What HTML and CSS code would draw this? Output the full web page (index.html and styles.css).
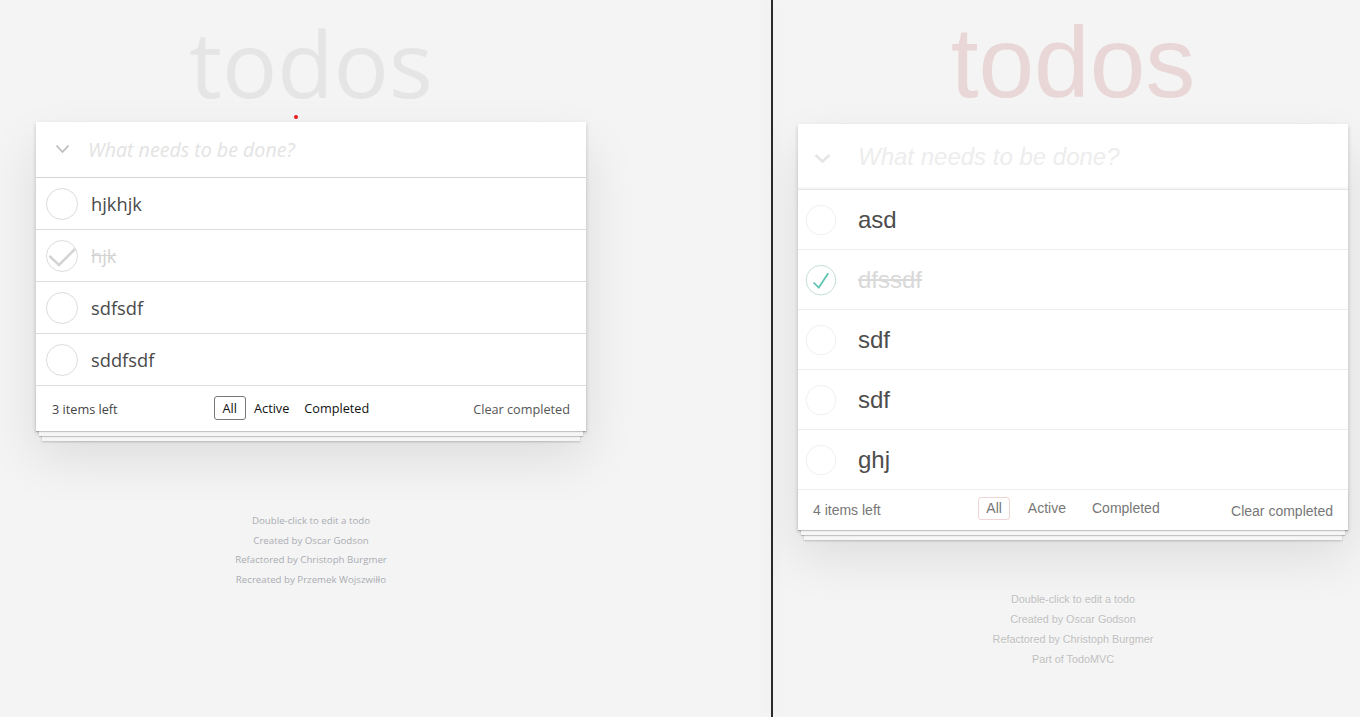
FILE: index.html
```html
<!DOCTYPE html>
<html lang="en">
<head>
<meta charset="utf-8">
<title>todos</title>
<link rel="stylesheet" href="styles.css">
</head>
<body>
<div class="screen">
  <section class="pane pane-left">
    <div class="a-app">
      <h1 class="a-title">todos</h1>
      <div class="a-card">
        <span class="a-dot"></span>
        <header class="a-head">
          <svg class="a-chev" width="15" height="10" viewBox="0 0 15 10"><polyline points="1.5,1.5 7.5,8 13.5,1.5" fill="none" stroke="#bdbdbd" stroke-width="1.8"/></svg>
          <span class="a-placeholder">What needs to be done?</span>
        </header>
        <ul class="a-list">
          <li class="a-item"><svg class="a-check" width="32" height="32" viewBox="0 0 32 32"><circle cx="16" cy="16" r="15.5" fill="none" stroke="#dcdcdc" stroke-width="1"/></svg><span class="a-label">hjkhjk</span></li>
          <li class="a-item done"><svg class="a-check" width="32" height="32" viewBox="0 0 32 32"><circle cx="16" cy="16" r="15.5" fill="none" stroke="#dcdcdc" stroke-width="1"/><polyline points="3.5,16 13,25 29,9" fill="none" stroke="#d4d4d4" stroke-width="2.6"/></svg><span class="a-label">hjk</span></li>
          <li class="a-item"><svg class="a-check" width="32" height="32" viewBox="0 0 32 32"><circle cx="16" cy="16" r="15.5" fill="none" stroke="#dcdcdc" stroke-width="1"/></svg><span class="a-label">sdfsdf</span></li>
          <li class="a-item"><svg class="a-check" width="32" height="32" viewBox="0 0 32 32"><circle cx="16" cy="16" r="15.5" fill="none" stroke="#dcdcdc" stroke-width="1"/></svg><span class="a-label">sddfsdf</span></li>
        </ul>
        <footer class="a-foot">
          <span class="a-count">3 items left</span>
          <ul class="a-filters">
            <li><a class="a-filter selected">All</a></li>
            <li><a class="a-filter">Active</a></li>
            <li><a class="a-filter">Completed</a></li>
          </ul>
          <span class="a-clear">Clear completed</span>
        </footer>
      </div>
      <div class="a-info">
        <p>Double-click to edit a todo</p>
        <p>Created by Oscar Godson</p>
        <p>Refactored by Christoph Burgmer</p>
        <p>Recreated by Przemek Wojszwiłło</p>
      </div>
    </div>
  </section>
  <div class="divider"></div>
  <section class="pane pane-right">
    <div class="b-app">
      <h1 class="b-title">todos</h1>
      <div class="b-card">
        <header class="b-head">
          <svg class="b-chev" width="17" height="11" viewBox="0 0 17 11"><polyline points="1.5,2 8.5,8.5 15.5,2" fill="none" stroke="#e6e6e6" stroke-width="2.6"/></svg>
          <span class="b-placeholder">What needs to be done?</span>
        </header>
        <ul class="b-list">
          <li class="b-item"><svg class="b-check" width="40" height="40" viewBox="-10 -18 100 135"><circle cx="50" cy="50" r="50" fill="none" stroke="#ededed" stroke-width="3"/></svg><span class="b-label">asd</span></li>
          <li class="b-item done"><svg class="b-check" width="40" height="40" viewBox="-10 -18 100 135"><circle cx="50" cy="50" r="50" fill="none" stroke="#bddad5" stroke-width="3"/><path fill="#5dc2af" d="M72 25L42 71 27 56l-4 4 20 20 34-52z"/></svg><span class="b-label">dfssdf</span></li>
          <li class="b-item"><svg class="b-check" width="40" height="40" viewBox="-10 -18 100 135"><circle cx="50" cy="50" r="50" fill="none" stroke="#ededed" stroke-width="3"/></svg><span class="b-label">sdf</span></li>
          <li class="b-item"><svg class="b-check" width="40" height="40" viewBox="-10 -18 100 135"><circle cx="50" cy="50" r="50" fill="none" stroke="#ededed" stroke-width="3"/></svg><span class="b-label">sdf</span></li>
          <li class="b-item"><svg class="b-check" width="40" height="40" viewBox="-10 -18 100 135"><circle cx="50" cy="50" r="50" fill="none" stroke="#ededed" stroke-width="3"/></svg><span class="b-label">ghj</span></li>
        </ul>
        <footer class="b-foot">
          <span class="b-count">4 items left</span>
          <ul class="b-filters">
            <li><a class="b-filter selected">All</a></li>
            <li><a class="b-filter">Active</a></li>
            <li><a class="b-filter">Completed</a></li>
          </ul>
          <span class="b-clear">Clear completed</span>
        </footer>
      </div>
      <div class="b-info">
        <p>Double-click to edit a todo</p>
        <p>Created by Oscar Godson</p>
        <p>Refactored by Christoph Burgmer</p>
        <p>Part of TodoMVC</p>
      </div>
    </div>
  </section>
</div>
</body>
</html>
```

FILE: styles.css
```css
* { box-sizing: border-box; }
html, body { margin: 0; padding: 0; }
body { background: #f5f5f5; width: 1360px; height: 717px; overflow: hidden; }
ul { list-style: none; margin: 0; padding: 0; }

.screen { display: flex; height: 717px; }
.pane { height: 717px; background: #f4f4f4; overflow: hidden; }
.pane-left { width: 771px; flex: none; }
.divider { width: 2px; flex: none; background: #2a2a2a; box-shadow: -5px 0 10px rgba(0,0,0,0.06), 4px 0 8px rgba(0,0,0,0.05); position: relative; z-index: 2; }
.pane-right { flex: 1; }

/* ---------- left implementation ---------- */
.a-app { width: 550px; margin-left: 36px; padding-top: 4px; font-family: "Open Sans", "Noto Sans", sans-serif; }
.a-title { margin: 0; height: 118px; line-height: 118px; font-size: 92px; font-weight: 380; color: #e5e5e5; text-align: center; }
.a-card { background: #fff; box-shadow: 0 2px 4px 0 rgba(0,0,0,0.2), 0 25px 50px 0 rgba(0,0,0,0.1); position: relative; }
.a-dot { position: absolute; left: 258px; top: -7px; width: 4px; height: 4px; border-radius: 50%; background: #e8141c; }
.a-head { height: 56px; display: flex; align-items: center; padding-left: 19px; border-bottom: 1px solid #d6d6d6; }
.a-chev { flex: none; margin-top: -2px; }
.a-placeholder { margin-left: 18px; font-size: 19.6px; font-style: italic; color: #e3e3e3; margin-top: 0; }
.a-item { height: 52px; display: flex; align-items: center; border-bottom: 1px solid #dcdcdc; padding-left: 10px; }
.a-check { flex: none; margin-top: 1px; }
.a-label { margin-left: 13px; font-size: 18.3px; color: #4a4a4a; }
.a-item.done .a-label { color: #d3d3d3; text-decoration: line-through; }
.a-foot { height: 45px; display: flex; align-items: center; padding: 0 16px; font-size: 12.7px; position: relative; }
.a-foot::before { content: ""; position: absolute; left: 0; right: 0; bottom: 0; height: 45px; box-shadow: 0 1px 1px rgba(0,0,0,0.2), 0 8px 0 -3px #f6f6f6, 0 9px 1px -3px rgba(0,0,0,0.2), 0 16px 0 -6px #f6f6f6, 0 17px 2px -6px rgba(0,0,0,0.2); pointer-events: none; }
.a-count { color: #444; }
.a-filters { flex: 1; display: flex; justify-content: center; align-items: center; margin-top: -1px; margin-left: 1px; }
.a-filter { display: block; padding: 2px 8px; border: 1px solid transparent; border-radius: 3px; color: #111; line-height: 18px; }
.a-filters li:nth-child(2) .a-filter { margin-left: -1px; }
.a-filters li:last-child .a-filter { margin-left: -3px; }
.a-filter.selected { border-color: #777; }
.a-clear { color: #555; }
.a-info { margin-top: 85px; text-align: center; font-size: 9.7px; color: #aaadb3; }
.a-info p { margin: 10px 0; line-height: 1; }

/* ---------- right implementation ---------- */
.b-app { width: 550px; margin-left: 25px; padding-top: 6px; font-family: "Liberation Sans", Arial, sans-serif; color: #4d4d4d; }
.b-title { margin: 0 0 6px; height: 112px; line-height: 112px; font-size: 100px; font-weight: 400; color: rgba(175,47,47,0.15); text-align: center; }
.b-card { background: #fff; box-shadow: 0 2px 4px 0 rgba(0,0,0,0.2), 0 25px 50px 0 rgba(0,0,0,0.1); }
.b-head { height: 66px; display: flex; align-items: center; padding-left: 16px; box-shadow: inset 0 -2px 1px rgba(0,0,0,0.03); border-bottom: 1px solid #e6e6e6; }
.b-chev { flex: none; margin-top: 3px; }
.b-placeholder { margin-left: 27px; font-size: 24px; font-style: italic; color: #ededed; }
.b-item { height: 60px; display: flex; align-items: center; border-bottom: 1px solid #ededed; }
.b-check { flex: none; }
.b-label { margin-left: 20px; margin-top: 2px; font-size: 24px; line-height: 1.2; color: #4d4d4d; }
.b-item.done .b-label { color: #d9d9d9; text-decoration: line-through; }
.b-foot { height: 40px; display: grid; grid-template-columns: 1fr auto 1fr; align-items: center; padding: 0 15px; font-size: 14px; color: #777; position: relative; }
.b-foot::before { content: ""; position: absolute; left: 0; right: 0; bottom: 0; height: 40px; box-shadow: 0 1px 1px rgba(0,0,0,0.2), 0 8px 0 -3px #f6f6f6, 0 9px 1px -3px rgba(0,0,0,0.2), 0 16px 0 -6px #f6f6f6, 0 17px 2px -6px rgba(0,0,0,0.2); pointer-events: none; }
.b-count { justify-self: start; margin-top: -1px; }
.b-filters { display: flex; margin-top: -3px; }
.b-filter { display: block; margin: 3px; padding: 3px 7px; border: 1px solid transparent; border-radius: 3px; line-height: 15px; }
.b-filters li + li .b-filter { margin-left: 7px; }
.b-filter.selected { border-color: rgba(175,47,47,0.2); }
.b-clear { justify-self: end; margin-top: 2px; }
.b-info { margin-top: 64px; text-align: center; font-size: 10.8px; color: #bfbfbf; text-shadow: 0 1px 0 rgba(255,255,255,0.5); }
.b-info p { margin: 9px 0; line-height: 11px; }
```
